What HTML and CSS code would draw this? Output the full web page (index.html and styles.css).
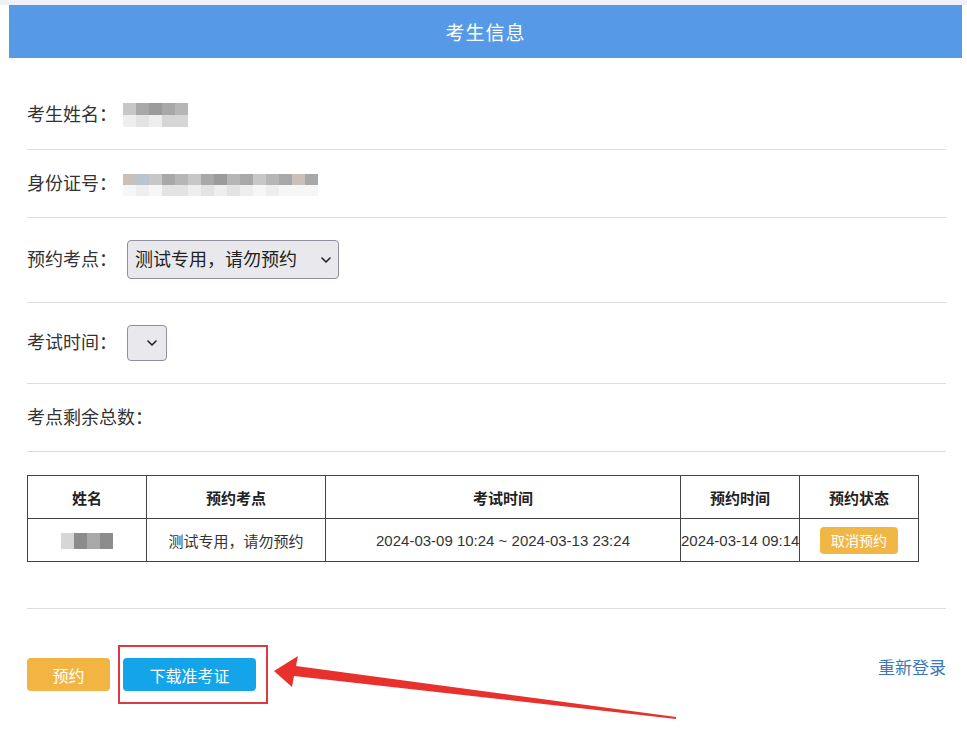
FILE: index.html
```html
<!DOCTYPE html>
<html lang="zh-CN">
<head>
<meta charset="utf-8">
<title>考生信息</title>
<link rel="stylesheet" href="styles.css">
</head>
<body>
<div class="page">
  <header class="title">考生信息</header>
  <main class="content">
    <div class="row">
      <span class="label">考生姓名：</span>
      <span class="mosaic mosaic-name">
        <i class="s4"></i><i class="s2"></i><i class="s1"></i><i class="s2"></i><i class="s3"></i>
        <i class="s7"></i><i class="s6"></i><i class="s7"></i><i class="s5"></i><i class="s5"></i>
      </span>
    </div>
    <div class="row">
      <span class="label">身份证号：</span>
      <span class="mosaic mosaic-id">
        <i class="t2"></i><i class="t1"></i><i class="s4"></i><i class="s2"></i><i class="s3"></i><i class="s4"></i><i class="s2"></i><i class="s1"></i><i class="s3"></i><i class="s2"></i><i class="s4"></i><i class="s3"></i><i class="s2"></i><i class="t2"></i><i class="s2"></i>
        <i class="s8"></i><i class="s7"></i><i class="s8"></i><i class="s6"></i><i class="s6"></i><i class="s7"></i><i class="s6"></i><i class="s7"></i><i class="s6"></i><i class="s7"></i><i class="s8"></i><i class="s7"></i><i class="s8"></i><i class="s8"></i><i class="s8"></i>
      </span>
    </div>
    <div class="row row-select">
      <span class="label">预约考点：</span>
      <span class="select-box select-site">
        <select class="select"><option>测试专用，请勿预约</option></select>
        <svg class="chevron" width="10" height="6" viewBox="0 0 10 6"><path d="M1 1l4 4 4-4" fill="none" stroke="#222" stroke-width="1.6" stroke-linecap="round" stroke-linejoin="round"/></svg>
      </span>
    </div>
    <div class="row row-select row-time">
      <span class="label">考试时间：</span>
      <span class="select-box select-time">
        <select class="select"><option></option></select>
        <svg class="chevron" width="10" height="6" viewBox="0 0 10 6"><path d="M1 1l4 4 4-4" fill="none" stroke="#222" stroke-width="1.6" stroke-linecap="round" stroke-linejoin="round"/></svg>
      </span>
    </div>
    <div class="row">
      <span class="label">考点剩余总数：</span>
    </div>

    <table class="records">
      <colgroup>
        <col class="c-name"><col class="c-site"><col class="c-time"><col class="c-book"><col class="c-state">
      </colgroup>
      <thead>
        <tr><th>姓名</th><th>预约考点</th><th>考试时间</th><th>预约时间</th><th>预约状态</th></tr>
      </thead>
      <tbody>
        <tr>
          <td><span class="mosaic mosaic-cell"><i class="s5"></i><i class="s0"></i><i class="s2"></i><i class="s0"></i></span></td>
          <td>测试专用，请勿预约</td>
          <td>2024-03-09 10:24 ~ 2024-03-13 23:24</td>
          <td class="tight">2024-03-14 09:14</td>
          <td><button class="btn btn-cancel">取消预约</button></td>
        </tr>
      </tbody>
    </table>

    <div class="separator"></div>

    <div class="actions">
      <button class="btn btn-book">预约</button>
      <span class="highlight"><button class="btn btn-download">下载准考证</button></span>
      <a class="relogin" href="#">重新登录</a>
    </div>
  </main>
</div>
<svg class="arrow" width="967" height="730" viewBox="0 0 967 730">
  <polygon points="274,671 298,656 296,666 676,717 676,719 294,676 292,687" fill="#e8312c"/>
</svg>
</body>
</html>
```
FILE: styles.css
```css
html, body {
  margin: 0;
  padding: 0;
  background: #ffffff;
}
body {
  border-top: 5px solid #eef1f8;
  font-family: "Liberation Sans", "Noto Sans CJK SC", sans-serif;
  color: #333333;
  position: relative;
  height: 725px;
  overflow: hidden;
}
.page {
  margin: 0 5px 0 9px;
}
.title {
  height: 53px;
  background: #5699e6;
  color: #ffffff;
  font-size: 19px;
  letter-spacing: 1px;
  display: flex;
  align-items: center;
  justify-content: center;
}
.content {
  padding: 23px 16px 0 18px;
}
.row {
  display: flex;
  align-items: center;
  padding: 22px 0 21px;
  line-height: 24px;
  font-size: 18px;
  border-bottom: 1px solid #dddddd;
}
.row:first-child {
  padding-bottom: 22px;
}
.row-select {
  padding-bottom: 23px;
}
.row-time {
  padding-bottom: 22px;
}
.label {
  margin-right: 6px;
}
.mosaic {
  display: inline-grid;
}
.mosaic i {
  display: block;
}
.mosaic-name {
  grid-template-columns: repeat(5, 13px);
  grid-template-rows: 12px 12px;
}
.mosaic-id {
  grid-template-columns: repeat(15, 13px);
  grid-template-rows: 11px 11px;
  margin-top: 2px;
}
.mosaic-cell {
  grid-template-columns: repeat(4, 13px);
  grid-template-rows: 16px;
  vertical-align: middle;
}
.s0 { background: #8c8c8c; }
.s1 { background: #9b9b9b; }
.s2 { background: #a8a8a8; }
.s3 { background: #b6b6b6; }
.s4 { background: #c7c7c7; }
.s5 { background: #d6d6d6; }
.s6 { background: #e3e3e3; }
.s7 { background: #eeeeee; }
.s8 { background: #f6f6f6; }
.t1 { background: #b8c4ce; }
.t2 { background: #c9c1b9; }

.select-box {
  position: relative;
  display: inline-block;
  margin-left: 4px;
}
.select {
  appearance: none;
  -webkit-appearance: none;
  display: block;
  box-sizing: border-box;
  background: #e9e9ed;
  border: 1px solid #8f8f9d;
  border-radius: 4px;
  color: #222222;
  font-family: "Liberation Sans", "Noto Sans CJK SC", sans-serif;
  font-size: 18px;
  padding: 0 30px 0 7px;
  margin: 0;
}
.select-site .select {
  width: 212px;
  height: 39px;
}
.select-time .select {
  width: 40px;
  height: 36px;
}
.chevron {
  position: absolute;
  top: 50%;
  margin-top: -3px;
  pointer-events: none;
}
.select-site .chevron {
  right: 8px;
}
.select-time .chevron {
  right: 10px;
}

.records {
  margin-top: 23px;
  width: 891px;
  border-collapse: collapse;
  table-layout: fixed;
  font-size: 15px;
  color: #333333;
}
.c-name { width: 119px; }
.c-site { width: 179px; }
.c-time { width: 355px; }
.c-book { width: 119px; }
.c-state { width: 119px; }
.records th,
.records td {
  border: 1px solid #444444;
  height: 42px;
  padding: 0;
  text-align: center;
  vertical-align: middle;
  white-space: nowrap;
}
.records th {
  font-weight: bold;
  color: #222222;
}
.records td.tight {
  overflow: hidden;
  text-align: left;
}
.btn {
  border: none;
  color: #ffffff;
  font-family: "Liberation Sans", "Noto Sans CJK SC", sans-serif;
  border-radius: 4px;
  padding: 0;
  cursor: pointer;
}
.btn-cancel {
  background: #f0b646;
  width: 78px;
  height: 27px;
  font-size: 14px;
  vertical-align: middle;
}
.separator {
  margin-top: 46px;
  border-top: 1px solid #dddddd;
}
.actions {
  display: flex;
  align-items: center;
  margin-top: 36px;
}
.btn-book {
  background: #f2b543;
  width: 83px;
  height: 33px;
  font-size: 16px;
}
.highlight {
  display: inline-flex;
  margin-left: 8px;
  padding: 11px 10px 11px 3px;
  border: 2px solid #dc3a40;
}
.btn-download {
  background: #13a4ea;
  width: 133px;
  height: 33px;
  font-size: 16px;
}
.relogin {
  margin-left: auto;
  align-self: flex-start;
  margin-top: 12px;
  font-size: 17px;
  line-height: 24px;
  color: #3b76b8;
  text-decoration: none;
}
.arrow {
  position: absolute;
  top: -5px;
  left: 0;
  pointer-events: none;
}
```
